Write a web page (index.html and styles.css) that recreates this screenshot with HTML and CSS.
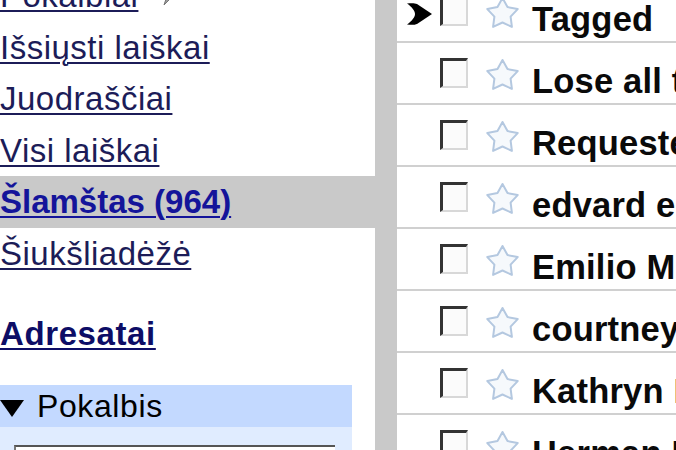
FILE: index.html
```html
<!DOCTYPE html>
<html lang="lt">
<head>
<meta charset="utf-8">
<title>Gmail</title>
<link rel="stylesheet" href="styles.css">
</head>
<body>
<div class="page">
  <aside class="nav">
    <ul class="folders">
      <li class="folder"><a href="#">Pokalbiai</a><svg class="chat-icon" viewBox="0 0 28 22" width="28" height="22"><path d="M3 2 C8 -2 22 -2 26 3 C28 7 24 11 16 11 L12 11 L6 17 L8 11 C2 10 0 6 3 2 Z" fill="#9a9a9a" stroke="#777" stroke-width="1"/></svg></li>
      <li class="folder"><a href="#">Išsiųsti laiškai</a></li>
      <li class="folder"><a href="#">Juodraščiai</a></li>
      <li class="folder"><a href="#">Visi laiškai</a></li>
      <li class="folder selected"><a href="#" class="strong">Šlamštas (964)</a></li>
      <li class="folder"><a href="#">Šiukšliadėžė</a></li>
    </ul>
    <a href="#" class="contacts">Adresatai</a>
    <div class="chat-box">
      <div class="chat-head"><span class="tri"></span>Pokalbis</div>
      <div class="chat-body"><div class="chat-input"></div></div>
    </div>
  </aside>
  <div class="divider"></div>
  <main class="list">
    <div class="row">
      <div class="mark"><svg class="pointer" viewBox="0 0 25 22" width="25" height="22"><path d="M0 0.5 C4 0 8 0 10 1 L25 11 L10 21 C8 22 4 22 0 21.5 C5 18 8 14 8 11 C8 8 5 4 0 0.5 Z" fill="#000"/></svg></div>
      <span class="check"></span>
      <svg class="star" viewBox="0 0 35 35" width="35" height="35"><polygon points="17.5,3 22.5,12.1 32.7,14.1 25.6,21.6 26.9,31.9 17.5,27.5 8.1,31.9 9.4,21.6 2.3,14.1 12.5,12.1"/></svg>
      <span class="subject">Tagged</span>
    </div>
    <div class="row">
      <div class="mark"></div>
      <span class="check"></span>
      <svg class="star" viewBox="0 0 35 35" width="35" height="35"><polygon points="17.5,3 22.5,12.1 32.7,14.1 25.6,21.6 26.9,31.9 17.5,27.5 8.1,31.9 9.4,21.6 2.3,14.1 12.5,12.1"/></svg>
      <span class="subject">Lose all the weight</span>
    </div>
    <div class="row">
      <div class="mark"></div>
      <span class="check"></span>
      <svg class="star" viewBox="0 0 35 35" width="35" height="35"><polygon points="17.5,3 22.5,12.1 32.7,14.1 25.6,21.6 26.9,31.9 17.5,27.5 8.1,31.9 9.4,21.6 2.3,14.1 12.5,12.1"/></svg>
      <span class="subject">Requested</span>
    </div>
    <div class="row">
      <div class="mark"></div>
      <span class="check"></span>
      <svg class="star" viewBox="0 0 35 35" width="35" height="35"><polygon points="17.5,3 22.5,12.1 32.7,14.1 25.6,21.6 26.9,31.9 17.5,27.5 8.1,31.9 9.4,21.6 2.3,14.1 12.5,12.1"/></svg>
      <span class="subject">edvard eriksen</span>
    </div>
    <div class="row">
      <div class="mark"></div>
      <span class="check"></span>
      <svg class="star" viewBox="0 0 35 35" width="35" height="35"><polygon points="17.5,3 22.5,12.1 32.7,14.1 25.6,21.6 26.9,31.9 17.5,27.5 8.1,31.9 9.4,21.6 2.3,14.1 12.5,12.1"/></svg>
      <span class="subject">Emilio Mendez</span>
    </div>
    <div class="row">
      <div class="mark"></div>
      <span class="check"></span>
      <svg class="star" viewBox="0 0 35 35" width="35" height="35"><polygon points="17.5,3 22.5,12.1 32.7,14.1 25.6,21.6 26.9,31.9 17.5,27.5 8.1,31.9 9.4,21.6 2.3,14.1 12.5,12.1"/></svg>
      <span class="subject">courtney</span>
    </div>
    <div class="row">
      <div class="mark"></div>
      <span class="check"></span>
      <svg class="star" viewBox="0 0 35 35" width="35" height="35"><polygon points="17.5,3 22.5,12.1 32.7,14.1 25.6,21.6 26.9,31.9 17.5,27.5 8.1,31.9 9.4,21.6 2.3,14.1 12.5,12.1"/></svg>
      <span class="subject">Kathryn Lee</span>
    </div>
    <div class="row">
      <div class="mark"></div>
      <span class="check"></span>
      <svg class="star" viewBox="0 0 35 35" width="35" height="35"><polygon points="17.5,3 22.5,12.1 32.7,14.1 25.6,21.6 26.9,31.9 17.5,27.5 8.1,31.9 9.4,21.6 2.3,14.1 12.5,12.1"/></svg>
      <span class="subject">Herman Lopez</span>
    </div>
  </main>
</div>
</body>
</html>
```

FILE: styles.css
```css
html, body {
  margin: 0;
  padding: 0;
  background: #fff;
  overflow: hidden;
}

body {
  font-family: "Liberation Sans", Arial, sans-serif;
  color: #000;
}

.page {
  display: grid;
  grid-template-columns: 375px 22px 1fr;
  height: 450px;
  overflow: hidden;
}

.nav {
  overflow: hidden;
}

.folders {
  list-style: none;
  margin: -30px 0 0 0;
  padding: 0;
}

.folder {
  height: 51.5px;
  line-height: 51.5px;
  font-size: 33px;
  white-space: nowrap;
}

.folder a {
  color: #1c1c58;
  letter-spacing: 0.5px;
  text-decoration: underline;
  text-decoration-thickness: 2px;
  text-underline-offset: 3px;
}

.folder.selected {
  background: #c9c9c9;
}

.folder a.strong {
  font-weight: bold;
  letter-spacing: 0;
  color: #14149a;
}

.chat-icon {
  margin-left: 20px;
  vertical-align: -3px;
}

.contacts {
  display: block;
  margin-top: 29px;
  height: 51px;
  line-height: 51px;
  font-size: 33px;
  font-weight: bold;
  letter-spacing: 0.6px;
  color: #0d0d66;
  text-decoration: underline;
  text-decoration-thickness: 2px;
  text-underline-offset: 3px;
  width: max-content;
}

.chat-box {
  margin-top: 26px;
  width: 352px;
}

.chat-head {
  height: 42px;
  line-height: 42px;
  background: #c3d9ff;
  font-size: 32px;
  letter-spacing: 0.6px;
  color: #000;
  display: flex;
  align-items: center;
}

.tri {
  width: 0;
  height: 0;
  border-left: 12.5px solid transparent;
  border-right: 12.5px solid transparent;
  border-top: 17px solid #000;
  margin-right: 13px;
  margin-top: 4px;
}

.chat-body {
  background: #e0ecff;
  padding: 18px 17px 0 14px;
  height: 60px;
}

.chat-input {
  height: 40px;
  background: #fff;
  border-top: 2px solid #555;
  border-left: 2px solid #777;
}

.divider {
  background: #c9c9c9;
}

.list {
  margin-top: -19px;
  overflow: hidden;
}

.row {
  height: 62px;
  box-sizing: border-box;
  border-bottom: 2px solid #d0d0d0;
  background: #fff;
  display: flex;
  align-items: flex-start;
  white-space: nowrap;
}

.mark {
  width: 43px;
  flex: none;
}

.pointer {
  display: block;
  margin: 22px 0 0 10px;
}

.check {
  flex: none;
  width: 28px;
  height: 30px;
  box-sizing: border-box;
  margin-top: 15px;
  background: #fbfbfb;
  border-top: 3px solid #333;
  border-left: 3px solid #333;
  border-right: 2px solid #d8d8d8;
  border-bottom: 2px solid #d8d8d8;
}

.star {
  flex: none;
  margin: 14px 0 0 17px;
}

.star polygon {
  fill: #f6f9fc;
  stroke: #b4c8e0;
  stroke-width: 2;
  stroke-linejoin: round;
}

.subject {
  margin: 18px 0 0 12px;
  font-size: 34.5px;
  line-height: 40px;
  font-weight: bold;
  letter-spacing: 0.2px;
  color: #0a0a0a;
}
```
